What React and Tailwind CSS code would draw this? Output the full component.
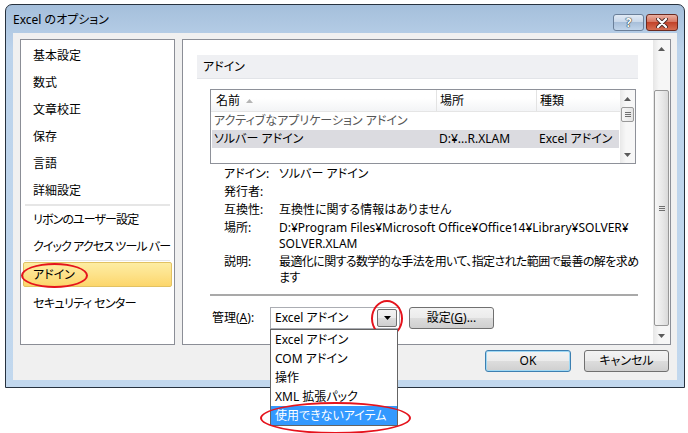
import React from 'react';

const navTop = ['基本設定', '数式', '文章校正', '保存', '言語', '詳細設定'];
const navMid = ['リボンのユーザー設定', 'クイック アクセス ツール バー'];
const dropItems = ['Excel アドイン', 'COM アドイン', '操作', 'XML 拡張パック'];

const Tri = ({ down = false, color = '#5a5a5a', w = 7, h = 4 }) => (
  <svg width={w} height={h} viewBox="0 0 7 4">
    {down ? <polygon points="0,0 7,0 3.5,4" fill={color} /> : <polygon points="0,4 7,4 3.5,0" fill={color} />}
  </svg>
);

const Grip = () => (
  <div className="flex flex-col gap-[1px]">
    <div className="w-[6px] h-[1px] bg-[#6f6f6f]" />
    <div className="w-[6px] h-[1px] bg-[#6f6f6f]" />
    <div className="w-[6px] h-[1px] bg-[#6f6f6f]" />
  </div>
);

const btn = 'flex items-center justify-center rounded-[3px] border border-[#707070] bg-[linear-gradient(#f3f3f3,#ebebeb_50%,#dddddd_50%,#cfcfcf)]';

const Ellipse = ({ className }) => (
  <div className={`absolute rounded-[50%] border-2 border-[#e5131c] pointer-events-none ${className}`} />
);

export default function App() {
  return (
    <div className="w-[688px] h-[433px] bg-white overflow-hidden text-[12px] text-black font-['Noto_Sans','Noto_Sans_CJK_JP',sans-serif] [font-feature-settings:'palt']">
      {/* window */}
      <div className="relative ml-[5px] mt-[4px] w-[680px] h-[384px] rounded-t-[7px] border border-[#27323f] bg-[linear-gradient(to_bottom,#a5bfdb,#bcd3eb_45px,#c2d8ee)]">
        {/* title bar */}
        <div className="h-[28px] flex items-start pl-[7px] pr-[6px]">
          <span className="mt-[8px] leading-[14px]">Excel のオプション</span>
          <div className="ml-auto mt-[9px] flex gap-[2px]">
            <div className="w-[31px] h-[17px] rounded-[3px] border border-[#6a7f99] bg-[linear-gradient(#e1eaf5,#c9d8ea_45%,#a8bfda_50%,#c0d4ea)] flex items-center justify-center">
              <span className="font-bold text-[12px] leading-none text-white [text-shadow:0_0_1px_#233,0_0_1px_#233,0_0_1px_#233]">?</span>
            </div>
            <div className="w-[32px] h-[17px] rounded-[3px] border border-[#6b2a20] bg-[linear-gradient(#eab0a2,#d77762_45%,#c2432a_50%,#d66e52)] flex items-center justify-center">
              <svg width="12" height="10" viewBox="0 0 12 10">
                <path d="M2 1 L10 9 M10 1 L2 9" stroke="#4a2a26" strokeWidth="4" strokeLinecap="round" />
                <path d="M2 1 L10 9 M10 1 L2 9" stroke="#ffffff" strokeWidth="2.2" strokeLinecap="round" />
              </svg>
            </div>
          </div>
        </div>

        {/* client area */}
        <div className="ml-[7px] w-[664px] h-[347px] bg-[#f0f0f0] flex flex-col">
          <div className="flex gap-[7px] pt-[6px] pl-[7px]">
            {/* left nav */}
            <div className="w-[155px] h-[306px] bg-white border border-[#8b8e96] pt-[2px]">
              {navTop.map((t) => (
                <div key={t} className="h-[27px] flex items-center pl-[12px]">{t}</div>
              ))}
              <div className="mx-[4px] h-[2px] bg-[#e6e6e6]" />
              {navMid.map((t) => (
                <div key={t} className="h-[27px] flex items-center pl-[12px] whitespace-nowrap tracking-[-0.9px]">{t}</div>
              ))}
              <div className="mx-[4px] h-[1px] bg-[#e6e6e6]" />
              <div className="relative mx-[2px] mt-[1px] mb-[3px] h-[25px] flex items-center pl-[9px] rounded-[2px] border border-[#e2c262] bg-[linear-gradient(#fdeda3,#fde28a_50%,#fcd66b)]">
                アドイン
                <Ellipse className="left-[-3px] top-[0px] w-[67px] h-[25px]" />
              </div>
              <div className="h-[27px] flex items-center pl-[12px] tracking-[-0.6px]">セキュリティ センター</div>
            </div>

            {/* right panel */}
            <div className="w-[489px] h-[306px] bg-white border border-[#8b8e96] flex">
              <div className="flex-1 flex flex-col">
                <div className="ml-[14px] mt-[15px] w-[441px] h-[24px] bg-[#eff0f3] border-b border-[#e2e4e8] flex items-center pl-[6px]">
                  アドイン
                </div>

                {/* list box */}
                <div className="ml-[27px] mt-[10px] w-[426px] h-[75px] border border-[#8e9199] flex">
                  <div className="flex-1 flex flex-col">
                    <div className="h-[22px] flex bg-[linear-gradient(#ffffff,#ffffff_40%,#f3f4f6)] border-b border-[#e5e5e5]">
                      <div className="w-[226px] flex items-center pl-[5px] gap-[6px] border-r border-[#e3e3e3]">
                        名前 <Tri color="#b5b5b5" />
                      </div>
                      <div className="w-[100px] flex items-center pl-[3px] border-r border-[#e3e3e3]">場所</div>
                      <div className="flex-1 flex items-center pl-[3px]">種類</div>
                    </div>
                    <div className="h-[18px] flex items-center pl-[3px] text-[#555]">アクティブなアプリケーション アドイン</div>
                    <div className="h-[18px] flex items-center bg-[#dbdbe0] mx-[1px]">
                      <div className="w-[226px] pl-[2px]">ソルバー アドイン</div>
                      <div className="w-[101px] pl-[1px]">D:¥...R.XLAM</div>
                      <div className="flex-1">Excel アドイン</div>
                    </div>
                  </div>
                  <div className="w-[15px] flex flex-col bg-[linear-gradient(to_right,#e8e8e8,#f7f7f7_40%,#f7f7f7)]">
                    <div className="h-[17px] flex items-center justify-center"><Tri /></div>
                    <div className="h-[15px] mx-[1px] rounded-[2px] border border-[#999] bg-[linear-gradient(to_right,#f6f6f6,#e4e4e4)] flex items-center justify-center"><Grip /></div>
                    <div className="flex-1" />
                    <div className="h-[17px] flex items-center justify-center"><Tri down /></div>
                  </div>
                </div>

                {/* details */}
                <div className="ml-[41px] mt-[2px] flex flex-col gap-[2px] leading-[16px]">
                  <div className="flex"><div className="w-[55px]">アドイン:</div><div>ソルバー アドイン</div></div>
                  <div className="flex"><div className="w-[55px]">発行者:</div><div /></div>
                  <div className="flex"><div className="w-[55px]">互換性:</div><div>互換性に関する情報はありません</div></div>
                  <div className="flex">
                    <div className="w-[55px]">場所:</div>
                    <div className="whitespace-nowrap">D:¥Program Files¥Microsoft Office¥Office14¥Library¥SOLVER¥<br />SOLVER.XLAM</div>
                  </div>
                  <div className="flex">
                    <div className="w-[55px]">説明:</div>
                    <div className="whitespace-nowrap tracking-[-0.6px]">最適化に関する数学的な手法を用いて、指定された範囲で最善の解を求め<br />ます</div>
                  </div>
                </div>

                <div className="ml-[27px] mt-[8px] w-[428px] h-[2px] bg-[#a9a9a9]" />

                {/* manage row */}
                <div className="ml-[29px] mt-[11px] flex items-center">
                  <div className="w-[58px]">管理(<span className="underline">A</span>):</div>
                  <div className="relative w-[130px] h-[22px] border border-[#abadb3] bg-white flex items-center pl-[4px]">
                    Excel アドイン
                    <div className="absolute right-[2px] top-[1px] w-[20px] h-[18px] rounded-[2px] border border-[#707070] bg-[linear-gradient(#f3f3f3,#ebebeb_50%,#dddddd_50%,#cfcfcf)] flex items-center justify-center">
                      <Tri down color="#000" />
                    </div>
                    <Ellipse className="left-[100px] top-[-8px] w-[32px] h-[37px]" />
                    {/* open drop-down list */}
                    <div className="absolute left-[-1px] top-[21px] z-10 w-[128px] border border-[#646464] bg-white">
                      {dropItems.map((t) => (
                        <div key={t} className="h-[19px] flex items-center pl-[4px] whitespace-nowrap">{t}</div>
                      ))}
                      <div className="h-[19px] flex items-center pl-[4px] bg-[#3399ff] text-white whitespace-nowrap">使用できないアイテム</div>
                      <Ellipse className="left-[-11px] top-[72px] w-[151px] h-[32px]" />
                    </div>
                  </div>
                  <div className={`${btn} ml-[9px] w-[85px] h-[22px]`}>
                    設定(<span className="underline">G</span>)...
                  </div>
                </div>
              </div>

              {/* panel scrollbar */}
              <div className="w-[17px] flex flex-col bg-[linear-gradient(to_right,#e6e6e6,#f6f6f6_35%,#f6f6f6)]">
                <div className="h-[17px] flex items-center justify-center"><Tri /></div>
                <div className="h-[33px]" />
                <div className="h-[236px] mx-[1px] rounded-[2px] border border-[#979797] bg-[linear-gradient(to_right,#f7f7f7,#e7e7e7_60%,#d9d9d9)] flex items-center justify-center"><Grip /></div>
                <div className="flex-1" />
                <div className="h-[17px] flex items-center justify-center"><Tri down /></div>
              </div>
            </div>
          </div>

          {/* OK / Cancel */}
          <div className="mt-[5px] flex justify-end gap-[13px] pr-[8px]">
            <div className="w-[86px] h-[22px] flex items-center justify-center rounded-[3px] border border-[#3c7fb1] shadow-[inset_0_0_0_1px_#9fd8f4] bg-[linear-gradient(#f3f3f3,#ebebeb_50%,#dddddd_50%,#cfcfcf)]">OK</div>
            <div className={`${btn} w-[85px] h-[22px]`}>キャンセル</div>
          </div>
        </div>
      </div>
    </div>
  );
}
